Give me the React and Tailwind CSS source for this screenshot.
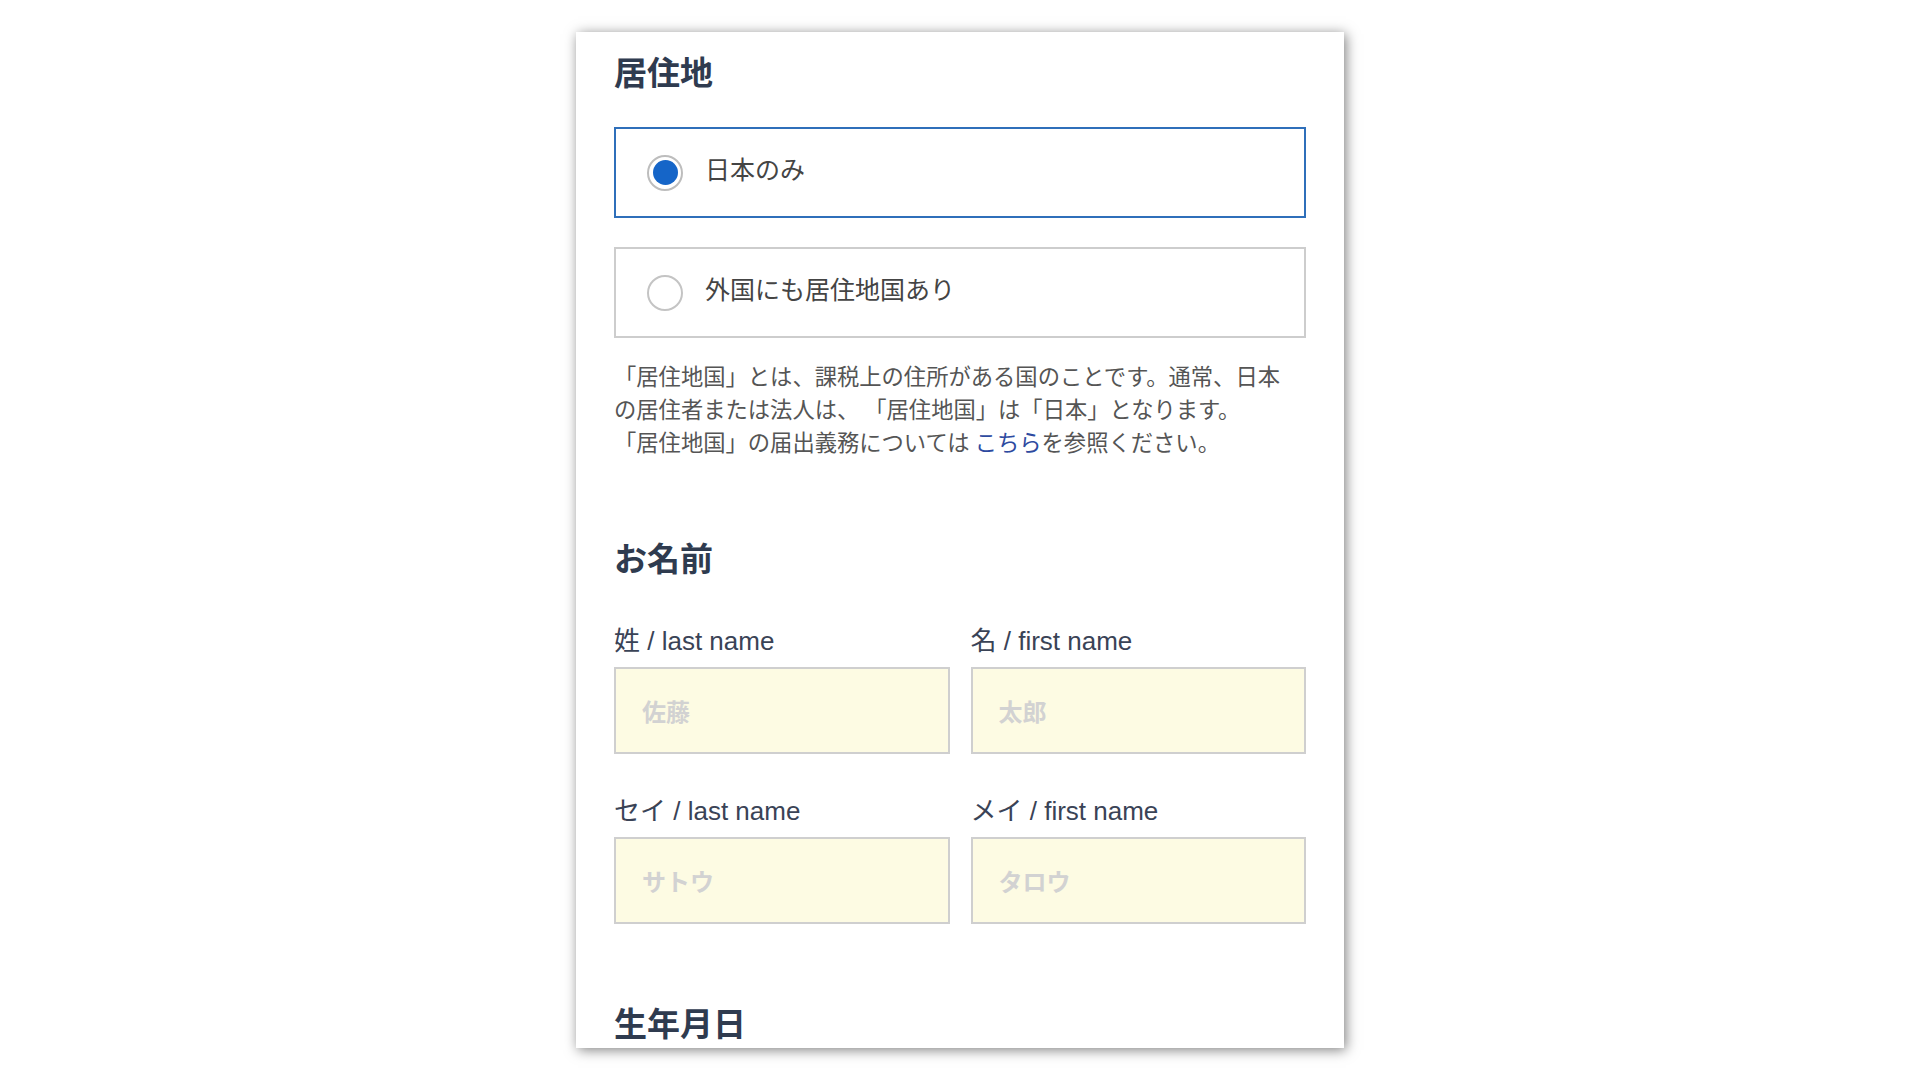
export default function App() {
  const font = "font-['Liberation_Sans','Noto_Sans_CJK_JP',sans-serif]";
  return (
    <div className={`min-h-screen bg-white pt-[32px] ${font}`}>
      <div className="mx-auto w-[768px] h-[1016px] overflow-hidden bg-white shadow-[2px_2px_12px_rgba(0,0,0,0.5)] px-[38px] pt-[18px]">
        <h2 className="text-[33px] leading-[48px] font-bold text-[#2f3b4f]">居住地</h2>

        <div className="mt-[29px] flex flex-col gap-[29px]">
          <div className="h-[91px] border-2 border-[#2f6fba] flex items-center pl-[31px]">
            <span className="w-[36px] h-[36px] rounded-full border-2 border-[#bdbdbd] flex items-center justify-center bg-white">
              <span className="w-[25px] h-[25px] rounded-full bg-[#1565c8]" />
            </span>
            <span className="ml-[22px] pb-[9px] text-[25px] leading-[34px] text-[#444444] font-['Noto_Sans_CJK_JP',sans-serif]">日本のみ</span>
          </div>
          <div className="h-[91px] border-2 border-[#cdcdcd] flex items-center pl-[31px]">
            <span className="w-[36px] h-[36px] rounded-full border-2 border-[#c4c4c4] bg-white" />
            <span className="ml-[22px] pb-[9px] text-[25px] leading-[34px] text-[#444444] font-['Noto_Sans_CJK_JP',sans-serif]">外国にも居住地国あり</span>
          </div>
        </div>

        <p className="mt-[21px] text-[22.3px] leading-[33px] text-[#555555] font-['Noto_Sans_CJK_JP',sans-serif]">
          「居住地国」とは、課税上の住所がある国のことです。通常、日本
          <br />
          の居住者または法人は、 「居住地国」は「日本」となります。
          <br />
          「居住地国」の届出義務については <span className="text-[#2d4aa0]">こちら</span>を参照ください。
        </p>

        <h2 className="mt-[78px] text-[33px] leading-[48px] font-bold text-[#2f3b4f]">お名前</h2>

        <div className="mt-[40px] grid grid-cols-2 gap-x-[21px] gap-y-[40px]">
          {[
            ["姓 / last name", "佐藤"],
            ["名 / first name", "太郎"],
            ["セイ / last name", "サトウ"],
            ["メイ / first name", "タロウ"],
          ].map(([label, ph]) => (
            <div key={label} className="flex flex-col">
              <span className="text-[26px] leading-[34px] text-[#3a4356]">{label}</span>
              <input
                type="text"
                placeholder={ph}
                className="mt-[9px] h-[87px] w-full border-2 border-[#cfcfcf] bg-[#fdfbe3] pl-[26px] text-[24px] font-bold text-[#333] placeholder:text-[#d2d2d2] outline-none font-['Noto_Sans_CJK_JP',sans-serif]"
              />
            </div>
          ))}
        </div>

        <h2 className="mt-[77px] text-[33px] leading-[48px] font-bold text-[#2f3b4f]">生年月日</h2>
      </div>
    </div>
  );
}
